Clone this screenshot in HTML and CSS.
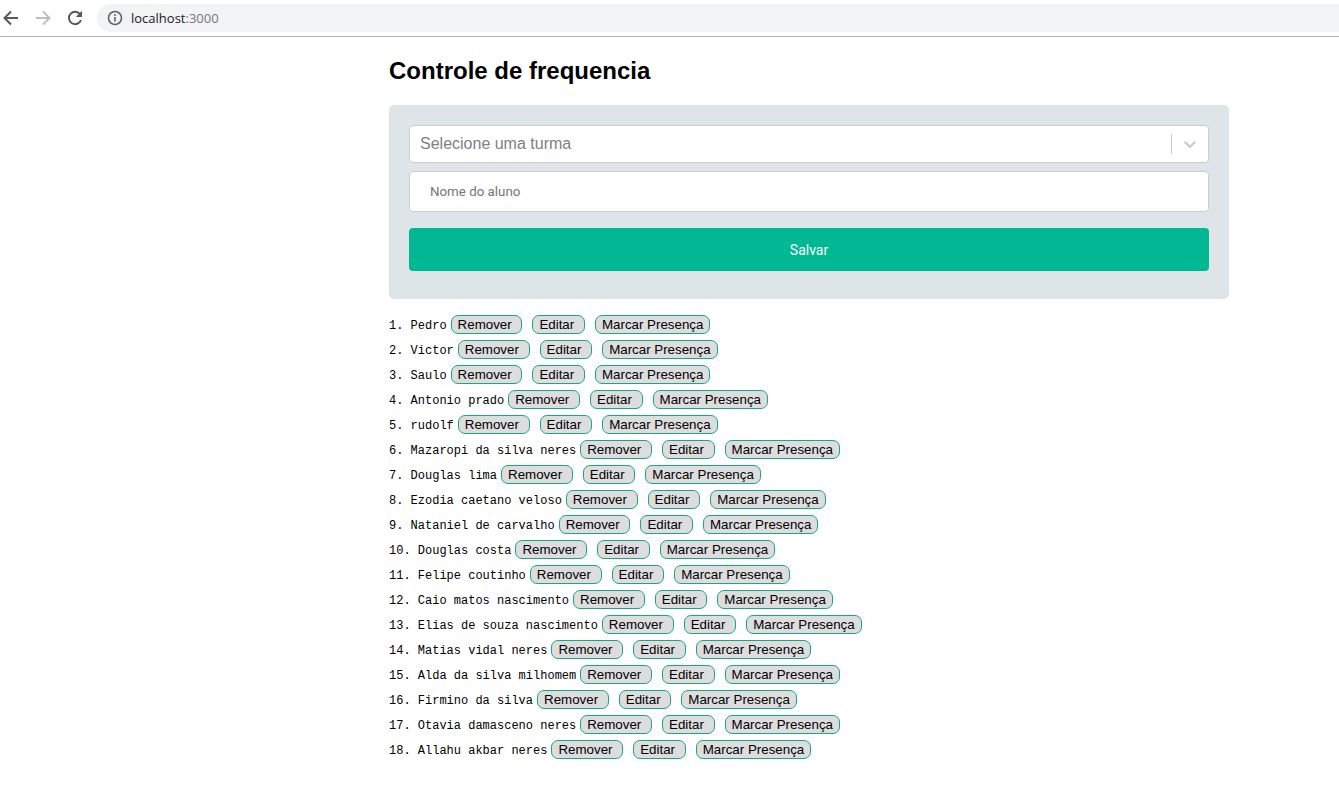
FILE: index.html
```
<!DOCTYPE html>
<html lang="pt-BR">
<head>
<meta charset="utf-8">
<title>Controle de frequencia</title>
<link rel="stylesheet" href="styles.css">
</head>
<body>
<header class="toolbar">
  <nav class="nav">
    <button class="nav-button" type="button" aria-label="Voltar"><svg viewBox="0 0 16 16"><path d="M15 8H2M8 1.500L1.500 8L8 14.500"/></svg></button>
    <button class="nav-button nav-disabled" type="button" aria-label="Avançar"><svg viewBox="0 0 16 16"><path d="M1 8H14M8 1.500L14.500 8L8 14.500"/></svg></button>
    <button class="nav-button" type="button" aria-label="Recarregar"><svg viewBox="0 0 16 16"><path d="M13.300 4.500A6.200 6.200 0 1 0 14 10"/><path class="solid" d="M15 0.800V7H8.800Z"/></svg></button>
  </nav>
  <div class="address">
    <svg class="info" viewBox="0 0 16 16"><circle cx="8" cy="8" r="6.500"/><path d="M8 7V11.500M8 4.300V5.900"/></svg>
    <span class="url">localhost<span class="port">:3000</span></span>
  </div>
</header>
<main class="page">
  <div class="content">
    <h1 class="title">Controle de frequencia</h1>
    <form class="panel">
      <div class="select-box">
        <select class="select" aria-label="Turma"><option>Selecione uma turma</option></select>
        <span class="indicator"><svg class="chevron" viewBox="0 0 20 20"><path d="M4.516 7.548c.436-.446 1.043-.481 1.576 0L10 11.295l3.908-3.747c.533-.481 1.141-.446 1.574 0 .436.445.408 1.197 0 1.615-.406.418-4.695 4.502-4.695 4.502a1.095 1.095 0 0 1-1.576 0S4.924 9.581 4.516 9.163s-.436-1.170 0-1.615z"/></svg></span>
      </div>
      <input class="name-input" type="text" placeholder="Nome do aluno" aria-label="Nome do aluno">
      <button class="save" type="button">Salvar</button>
    </form>
    <ul class="students" id="students"></ul>
  </div>
</main>
<script src="app.js"></script>
</body>
</html>
```
FILE: app.js
```
const students = [
  "Pedro", "Victor", "Saulo", "Antonio prado", "rudolf",
  "Mazaropi da silva neres", "Douglas lima", "Ezodia caetano veloso",
  "Nataniel de carvalho", "Douglas costa", "Felipe coutinho",
  "Caio matos nascimento", "Elias de souza nascimento", "Matias vidal neres",
  "Alda da silva milhomem", "Firmino da silva", "Otavia damasceno neres",
  "Allahu akbar neres"
];
const list = document.getElementById("students");
students.forEach((name, index) => {
  const item = document.createElement("li");
  item.className = "student";
  const label = document.createElement("span");
  label.className = "student-name";
  label.textContent = `${index + 1}. ${name}`;
  const actions = document.createElement("div");
  actions.className = "actions";
  ["Remover ", "Editar ", "Marcar Presença"].forEach((text) => {
    const button = document.createElement("button");
    button.type = "button";
    button.className = "action";
    button.textContent = text;
    actions.append(button);
  });
  item.append(label, actions);
  list.append(item);
});
```
FILE: styles.css
```
* { box-sizing: border-box; }
body {
  margin: 0;
  background: #fff;
  color: #000;
  font-family: "Liberation Sans", Arial, sans-serif;
}
.toolbar {
  display: flex;
  align-items: center;
  gap: 14px;
  padding: 4px 0 4px 3px;
  border-bottom: 1px solid #b3b4b6;
}
.nav { display: flex; gap: 16px; }
.nav-button {
  display: flex;
  padding: 0;
  border: 0;
  background: none;
  color: #55585c;
}
.nav-disabled { color: #bcbec0; }
.nav-button svg, .info {
  width: 16px;
  height: 16px;
  fill: none;
  stroke: currentColor;
  stroke-width: 2;
}
.nav-button .solid { fill: currentColor; stroke: none; }
.address {
  display: flex;
  flex: 1;
  align-items: center;
  gap: 8px;
  height: 28px;
  padding-left: 10px;
  border-radius: 14px 0 0 14px;
  background: #f1f3f4;
}
.address .info { color: #5f6368; stroke-width: 1.6; }
.url {
  color: #202124;
  font: 13px/20px "Open Sans", "Noto Sans", sans-serif;
}
.port { color: #75797e; }
.page {
  display: grid;
  grid-template-columns: 389fr minmax(0, 840px) 110fr;
}
.content { grid-column: 2; }
.title {
  margin: 20px 0;
  font-size: 24px;
  line-height: 28px;
}
.panel {
  display: flex;
  flex-direction: column;
  padding: 20px 20px 28px;
  border-radius: 5px;
  background: #dee5e9;
}
.select-box { display: grid; margin-bottom: 8px; }
.select, .indicator { grid-area: 1 / 1; }
.select {
  height: 38px;
  padding: 0 48px 2px 10px;
  border: 1px solid #ccc;
  border-radius: 4px;
  appearance: none;
  background: #fff;
  color: #808080;
  font: 16px "Liberation Sans", Arial, sans-serif;
}
.indicator {
  justify-self: end;
  align-self: center;
  display: flex;
  align-items: center;
  height: 20px;
  padding: 0 9px 0 8px;
  border-left: 1px solid #ccc;
  pointer-events: none;
}
.chevron { width: 20px; height: 20px; fill: #ccc; }
.name-input {
  height: 41px;
  margin-bottom: 16px;
  padding: 0 20px;
  border: 1px solid #ccc;
  border-radius: 4px;
  background: #fff;
  font-family: Roboto, sans-serif;
}
.name-input::placeholder { color: #757575; }
.save {
  height: 43px;
  border: 0;
  border-radius: 4px;
  background: #00b894;
  color: #fff;
  font: 14px Roboto, sans-serif;
}
.students {
  display: grid;
  gap: 6px;
  margin: 16px 0;
  padding: 0;
  list-style: none;
}
.student {
  display: flex;
  align-items: baseline;
  gap: 4px;
  height: 19px;
}
.student-name { font: 12px/16px "Liberation Mono", monospace; }
.actions { display: flex; gap: 10px; }
.action {
  height: 19px;
  padding: 0 6px;
  border: 1px solid #1aa685;
  border-radius: 7px;
  background: #ddd;
  color: #000;
  font-family: "Liberation Sans", Arial, sans-serif;
  line-height: 17px;
  white-space: pre;
}
```
